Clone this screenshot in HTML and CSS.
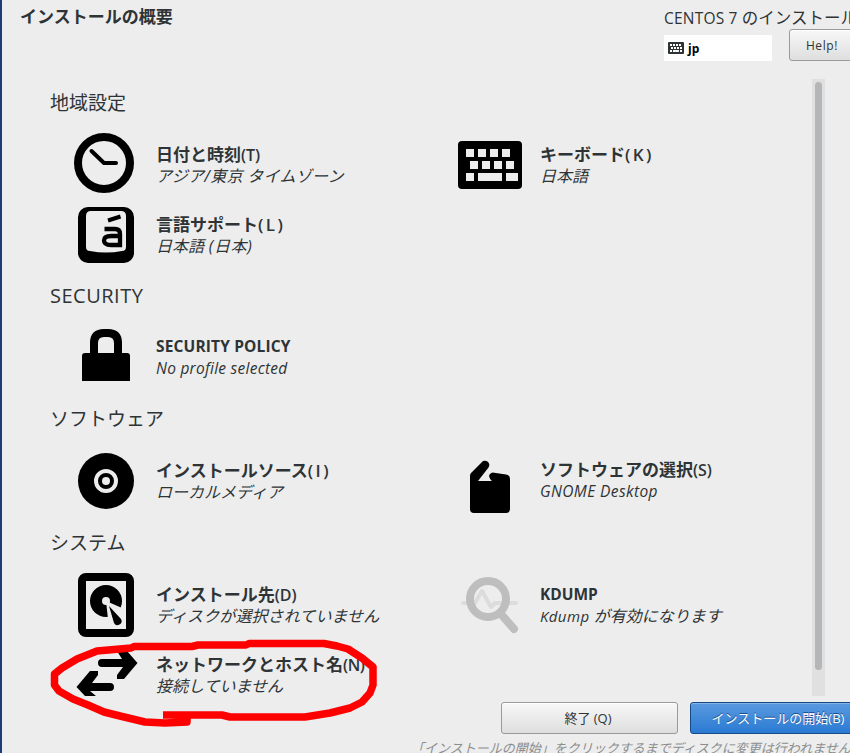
FILE: index.html
```
<!DOCTYPE html>
<html lang="ja">
<head>
<meta charset="utf-8">
<title>インストールの概要</title>
<link rel="stylesheet" href="styles.css">
</head>
<body>
<div class="window">
  <header class="top">
    <h1>インストールの概要</h1>
    <div class="product">
      <div class="product-name"><span class="centos">CENTOS 7 </span>のインストール</div>
      <div class="tools">
        <div class="layout-indicator">
          <svg width="16" height="12" viewBox="0 0 16 12"><rect width="16" height="12" rx="1" fill="#2e3436"/><path d="M2 3h12M3 6h11M2 9h2M5 9h6M12 9h2" stroke="#fff" stroke-width="1.8" stroke-dasharray="2 1"/><path d="M5 9h6" stroke="#fff" stroke-width="1.8"/></svg>
          <b>jp</b>
        </div>
        <button class="btn help">Help!</button>
      </div>
    </div>
  </header>

  <div class="middle">
    <main>
      <section>
        <h2>地域設定</h2>
        <div class="grid">
          <div class="spoke">
            <svg viewBox="74 130 64 70"><circle cx="104" cy="163" r="26" fill="none" stroke="#000" stroke-width="8"/><path d="M91.500 151 104 163h12" fill="none" stroke="#000" stroke-width="4" stroke-linecap="round" stroke-linejoin="round"/></svg>
            <div><h3>日付と時刻<span>(T)</span></h3><p class="zone">アジア/東京 タイムゾーン</p></div>
          </div>
          <div class="spoke">
            <svg viewBox="458 130 64 70"><rect x="458" y="141" width="64" height="48" rx="4"/><path fill="#ededed" d="M466 149h8v8h-8zM478 149h8v8h-8zM490 149h8v8h-8zM502 149h8v8h-8zM470 161h8v8h-8zM482 161h8v8h-8zM494 161h8v8h-8zM506 161h8v8h-8zM466 173h8v8h-8zM478 173h24v8h-24zM506 173h12v8h-12z"/></svg>
            <div><h3>キーボード<span class="wide">(K)</span></h3><p>日本語</p></div>
          </div>
          <div class="spoke">
            <svg viewBox="74 200 64 70"><rect x="78" y="207" width="56" height="56" rx="10"/><path fill="#ededed" d="M91 211h30q5 0 5 5v31q0 4-4 4-16 3-32 0-4 0-4-4v-31q0-5 5-5z"/><path d="M108 220.500l12.500-4" fill="none" stroke="#000" stroke-width="4"/><path d="M104.500 229h10.500q5 0 5 5v11h-9q-7 0-7-4.500t7-4.500h9" fill="none" stroke="#000" stroke-width="4.300"/></svg>
            <div><h3>言語サポート<span class="wide">(L)</span></h3><p>日本語<span class="country"> (日本)</span></p></div>
          </div>
        </div>
      </section>
      <section>
        <h2 class="latin">SECURITY</h2>
        <div class="grid">
          <div class="spoke">
            <svg viewBox="74 323 64 70"><path d="M82 381v-25q0-3 3-3h5v-10q0-14 14-14h4q14 0 14 14v10h5q3 0 3 3v25zM98 353h16v-10q0-6-6-6h-4q-6 0-6 6z" fill-rule="evenodd"/></svg>
            <div class="raised"><h3 class="policy">SECURITY POLICY</h3><p class="profile">No profile selected</p></div>
          </div>
        </div>
      </section>
      <section class="software">
        <h2>ソフトウェア</h2>
        <div class="grid">
          <div class="spoke">
            <svg viewBox="74 446 64 70"><circle cx="106" cy="481" r="28"/><circle cx="106" cy="481" r="10" fill="none" stroke="#ededed" stroke-width="4"/><circle cx="106" cy="481" r="4" fill="#ededed"/></svg>
            <div><h3>インストールソース<span class="wide">(I)</span></h3><p>ローカルメディア</p></div>
          </div>
          <div class="spoke">
            <svg viewBox="458 446 64 70"><path d="M470 509v-33q0-2 1-3l10.500-10.500a4.300 4.300 0 0 1 7 5L478 481h14l-1.500-1.500q-3.500-5 2-7L506 474.500q4 .5 4 4.500v30q0 4-4 4h-32q-4 0-4-4z"/></svg>
            <div class="raised"><h3>ソフトウェアの選択<span>(S)</span></h3><p class="gnome">GNOME Desktop</p></div>
          </div>
        </div>
      </section>
      <section>
        <h2>システム</h2>
        <div class="grid">
          <div class="spoke">
            <svg viewBox="74 570 64 70"><rect x="82" y="577" width="48" height="56" rx="4" fill="none" stroke="#000" stroke-width="8"/><path d="M86 581h40v48H86z" fill="#ededed"/><circle cx="106" cy="601" r="16"/><path d="M106 601l2 18 8 3 6-14z" fill="#ededed"/><circle cx="106" cy="601" r="4" fill="#ededed"/><path d="M109 606l12 13a4 4 0 0 1-7 4z"/></svg>
            <div><h3>インストール先<span>(D)</span></h3><p class="disk">ディスクが選択されていません</p></div>
          </div>
          <div class="spoke">
            <svg viewBox="458 570 64 70"><path d="M463 603h12l7-12 9 16 4-4h21" fill="none" stroke="#dcdcdc" stroke-width="4" stroke-linecap="round" stroke-linejoin="round"/><circle cx="488" cy="599" r="18" fill="none" stroke="#bebebe" stroke-width="8"/><path d="M500 613l14 16" stroke="#bebebe" stroke-width="8" stroke-linecap="round"/></svg>
            <div><h3 class="kdump">KDUMP</h3><p><span class="kdump-name">Kdump </span>が有効になります</p></div>
          </div>
          <div class="spoke">
            <svg viewBox="74 640 64 70"><path d="M102 659h20l-5-8h10l10.500 12L124 679h-7v-4l6-8h-21a4 4 0 0 1 0-8zM110 683H92l6-8v-4h-8L76.500 687 85 696h11l-6-5h20a4 4 0 0 0 0-8z"/></svg>
            <div><h3>ネットワークとホスト名<span class="tight">(N)</span></h3><p>接続していません</p></div>
          </div>
        </div>
      </section>
    </main>
    <div class="scrollbar"><div class="thumb"></div></div>
  </div>

  <footer>
    <div class="actions">
      <button class="btn quit">終了 (Q)</button>
      <button class="btn begin">インストールの開始(B)</button>
    </div>
    <p class="note">「インストールの開始」をクリックするまでディスクに変更は行われません。</p>
  </footer>

  <svg class="marker" width="334" height="94" viewBox="48 636 334 94"><path d="M163 715H222L230 717H305L330 713 350 708 362 702 370 693 373 685V667L362 658 348 649 337 646 324 643.500H249L246 645H198L192 646.500H134L131 648 97 651 77 659 62 668 54.500 674V685L59 691 73 699 88 705 104 712 120 716 145 722 165 723 187 722V715"/></svg>
</div>
</body>
</html>
```

FILE: styles.css
```
* { box-sizing: border-box; }
body {
  margin: 0;
  background: #ededed;
  color: #2e3436;
  font-family: "Open Sans", "Noto Sans CJK JP", sans-serif;
  overflow: hidden;
}
h1, h2, h3, p { margin: 0; }
.window {
  position: relative;
  width: 850px;
  height: 753px;
  overflow: hidden;
  border-left: 2px solid #1d3d77;
  white-space: nowrap;
}
.top {
  height: 79px;
  display: flex;
  justify-content: space-between;
  padding: 6px 0 0 18px;
}
h1 { font-size: 17px; line-height: 22px; }
.product { width: 186px; padding-top: 2px; }
.product-name { font-size: 16.500px; line-height: 20px; }
.centos { font-size: 15.500px; letter-spacing: .2px; }
.tools { display: flex; gap: 17px; margin-top: 1px; }
.layout-indicator {
  flex: none;
  width: 108px;
  height: 26px;
  margin-top: 6px;
  padding: 0 4px;
  display: flex;
  align-items: center;
  gap: 4px;
  background: #fff;
  color: #000;
  font-size: 12px;
}
.btn {
  flex: none;
  height: 32px;
  padding: 0;
  border: 1px solid #9a9a9a;
  border-radius: 3px;
  background: linear-gradient(#f8f8f8, #dedede);
  box-shadow: inset 0 1px #fff;
  color: #2e3436;
  font: 13px/28px "Open Sans", "Noto Sans CJK JP", sans-serif;
}
.help { width: 66px; padding-top: 2px; font-size: 12px; letter-spacing: .6px; }
.middle { display: flex; height: 617px; }
main { width: 810px; height: 617px; overflow: hidden; padding: 10px 0 0 48px; }
section { margin-bottom: 12px; }
.software { margin-bottom: 13px; }
h2 { font-size: 19px; font-weight: 400; line-height: 28px; margin-bottom: 13px; }
.latin { font-size: 20px; letter-spacing: .5px; }
.grid { display: grid; grid-template-columns: 384px 384px; grid-auto-rows: 70px; padding-left: 24px; }
.spoke { display: flex; align-items: center; gap: 18px; }
.spoke svg { width: 64px; height: 70px; flex: none; }
h3 { font-size: 17px; line-height: 22px; padding-top: 1px; margin-bottom: -1px; }
h3 span { font-size: 16px; font-weight: 600; }
h3 .wide { font-size: 17px; letter-spacing: 2.400px; }
h3 .tight { letter-spacing: -.4px; }
.spoke p { font-size: 16px; line-height: 22px; font-style: italic; }
.raised { margin-top: -2px; }
.policy, .kdump { font-size: 15.500px; font-weight: 700; padding-top: 0; margin-bottom: 0; }
.policy { letter-spacing: .15px; }
.spoke .profile { font-size: 15.500px; letter-spacing: .25px; }
.spoke .gnome { font-size: 15.500px; letter-spacing: .4px; }
.kdump-name { font-size: 15px; letter-spacing: .4px; }
.spoke .zone { letter-spacing: .3px; }
.spoke .disk { letter-spacing: .1px; }
.country { letter-spacing: .6px; }
.scrollbar { width: 13px; padding: 3px; background: #e0e0e0; }
.thumb { width: 7px; height: 588px; border-radius: 4px; background: #b4b6b8; }
footer { padding: 6px 0 0 409px; }
.actions { display: flex; gap: 12px; padding-left: 90px; }
.quit { width: 177px; padding-right: 3px; }
.begin {
  width: 176px;
  border-color: #184a87;
  background: linear-gradient(#5a9ae0, #2a7ad2);
  box-shadow: inset 0 1px #83b4e9;
  color: #fff;
  text-shadow: 0 -1px #184a87;
}
.note { margin-top: 4px; font-size: 13px; line-height: 20px; font-style: italic; color: #8b8e8f; }
.marker { position: absolute; left: 46px; top: 636px; }
.marker path { fill: none; stroke: #f00; stroke-width: 7.500; stroke-linejoin: round; }
```
